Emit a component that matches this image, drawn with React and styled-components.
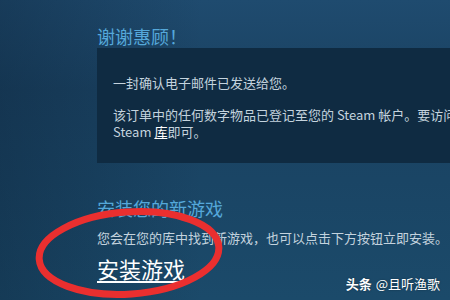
import React from 'react'
import styled, { createGlobalStyle } from 'styled-components'

const GlobalStyle = createGlobalStyle`
  html, body {
    margin: 0;
    padding: 0;
    width: 450px;
    height: 300px;
    overflow: hidden;
  }
  body {
    font-family: "Noto Sans CJK SC", "Noto Sans", sans-serif;
  }
`

const Page = styled.div`
  position: relative;
  width: 450px;
  height: 300px;
  overflow: hidden;
  box-sizing: border-box;
  padding: 24px 0 0 97px;
  background:
    linear-gradient(90deg, rgba(10, 30, 50, 0.35) 0%, rgba(10, 30, 50, 0) 45%),
    linear-gradient(180deg, #1f4b6f 0%, #1a4262 30%, #1a4565 60%, #1b4a6a 100%);
`

const Title = styled.h2`
  margin: 0;
  font-size: 18px;
  line-height: 24px;
  font-weight: 400;
  color: #55a8da;
`

const NoticeBox = styled.div`
  width: 480px;
  height: 115px;
  box-sizing: border-box;
  background: #0f2b42;
  padding: 26px 0 0 16px;
`

const Para = styled.p`
  margin: 0 0 15px 0;
  font-size: 13px;
  line-height: 17px;
  color: #c4d3de;
  white-space: nowrap;
`

const LibLink = styled.span`
  color: #ffffff;
  text-decoration: underline;
`

const SubTitle = styled.h3`
  margin: 33px 0 0 0;
  font-size: 18px;
  line-height: 24px;
  font-weight: 400;
  color: #55a8da;
`

const Desc = styled.p`
  margin: 9px 0 0 0;
  font-size: 13px;
  line-height: 18px;
  color: #c4d3de;
  white-space: nowrap;
`

const InstallLink = styled.a`
  display: inline-block;
  margin-top: 7px;
  font-size: 22px;
  line-height: 28px;
  color: #ffffff;
  text-decoration: underline;
  text-underline-offset: 3px;
  text-decoration-thickness: 2px;
`

const Circle = styled.svg`
  position: absolute;
  left: 0;
  top: 0;
  pointer-events: none;
`

const Watermark = styled.div`
  position: absolute;
  right: 10px;
  bottom: 7px;
  font-size: 13px;
  line-height: 18px;
  color: #ffffff;
  text-shadow: 0 0 2px rgba(0, 0, 0, 0.4);
`

const Brand = styled.span`
  font-weight: 700;
  margin-right: 4px;
`

const App = () => (
  <>
    <GlobalStyle />
    <Page>
      <Title>谢谢惠顾！</Title>
      <NoticeBox>
        <Para>一封确认电子邮件已发送给您。</Para>
        <Para>
          该订单中的任何数字物品已登记至您的 Steam 帐户。要访问您的新物品，请前往您的
          <br />
          Steam <LibLink>库</LibLink>即可。
        </Para>
      </NoticeBox>
      <SubTitle>安装您的新游戏</SubTitle>
      <Desc>您会在您的库中找到新游戏，也可以点击下方按钮立即安装。</Desc>
      <InstallLink>安装游戏</InstallLink>
      <Circle width="450" height="300" viewBox="0 0 450 300">
        <ellipse
          cx="129"
          cy="253"
          rx="90"
          ry="41"
          transform="rotate(-4 129 253)"
          fill="none"
          stroke="#ea2f2f"
          strokeWidth="7"
        />
      </Circle>
      <Watermark>
        <Brand>头条</Brand>@且听渔歌
      </Watermark>
    </Page>
  </>
)

export default App
